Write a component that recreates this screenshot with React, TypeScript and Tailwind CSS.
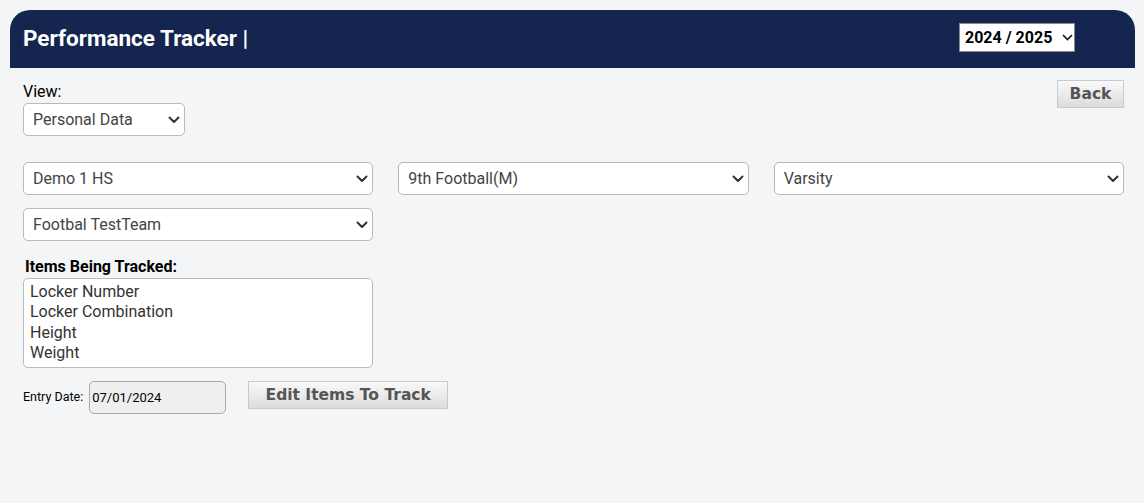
import React from "react";

const Chevron = ({ className = "" }: { className?: string }) => (
  <svg
    width="12"
    height="8"
    viewBox="0 0 12 8"
    className={"pointer-events-none absolute top-1/2 -translate-y-1/2 " + className}
  >
    <path d="M1.5 1.5 L6 6 L10.5 1.5" stroke="#333" strokeWidth="2" fill="none" strokeLinecap="round" strokeLinejoin="round" />
  </svg>
);

const Select = ({ value, className = "" }: { value: string; className?: string }) => (
  <div className={"relative " + className}>
    <select
      defaultValue={value}
      className="h-[33px] w-full appearance-none rounded-[5px] border border-[#b9b9b9] bg-white pl-[9px] pr-6 text-[16px] text-[#444] outline-none"
    >
      <option>{value}</option>
    </select>
    <Chevron className="right-[5px]" />
  </div>
);

const GrayButton = ({ label, className = "" }: { label: string; className?: string }) => (
  <button
    className={
      "h-[28px] border border-[#cacaca] bg-gradient-to-b from-[#f9f9f9] to-[#dcdcdc] pt-[2px] font-['DejaVu_Sans',Verdana,sans-serif] text-[15.5px] font-bold text-[#555] " +
      className
    }
  >
    {label}
  </button>
);

export default function App() {
  return (
    <div className="min-h-screen bg-[#f4f5f7] pt-[10px] font-['Roboto',Arial,sans-serif]">
      <div className="ml-[10px] mr-[9px] flex h-[58px] items-center justify-between rounded-t-[20px] bg-[#14254f] pl-[13px] pr-[60px]">
        <h1 className="text-[22.5px] font-bold text-white">Performance Tracker |</h1>
        <div className="relative -mt-[3px]">
          <select
            defaultValue="2024 / 2025"
            className="h-[29px] w-[116px] appearance-none border border-[#8a8a8a] bg-white pl-[5px] text-[16px] font-bold text-black outline-none"
          >
            <option>2024 / 2025</option>
          </select>
          <svg width="11" height="7" viewBox="0 0 11 7" className="pointer-events-none absolute right-[2px] top-[11px]">
            <path d="M1 1 L5.5 5.5 L10 1" stroke="#111" strokeWidth="1.6" fill="none" />
          </svg>
        </div>
      </div>

      <div className="pl-[23px] pr-[20px]">
        <div className="flex items-start justify-between">
          <div className="mt-[14px]">
            <div className="text-[16px] leading-[20px] text-black">View:</div>
            <Select value="Personal Data" className="mt-[1px] w-[162px]" />
          </div>
          <GrayButton label="Back" className="mt-[12px] w-[67px]" />
        </div>

        <div className="mt-[26px] grid grid-cols-3 gap-x-[25px] gap-y-[13px]">
          <Select value="Demo 1 HS" />
          <Select value="9th Football(M)" />
          <Select value="Varsity" />
          <Select value="Footbal TestTeam" />
        </div>

        <div className="ml-[2px] mt-[16px] text-[16px] font-bold leading-[20px] text-black">Items Being Tracked:</div>
        <div className="mt-[1px] h-[90px] w-[350px] rounded-[5px] border border-[#b9b9b9] bg-white pl-[6px] pt-[3px] text-[16px] leading-[20.3px] text-[#333]">
          <div>Locker Number</div>
          <div>Locker Combination</div>
          <div>Height</div>
          <div>Weight</div>
        </div>

        <div className="mt-[13px] flex items-start">
          <div className="flex items-center">
            <span className="text-[12.5px] text-black">Entry Date:</span>
            <input
              defaultValue="07/01/2024"
              className="ml-[6px] h-[33px] w-[137px] rounded-[5px] border border-[#aaa] bg-[#efefef] pl-[2px] text-[13px] text-black outline-none"
            />
          </div>
          <GrayButton label="Edit Items To Track" className="ml-[22px] h-[27px] w-[200px]" />
        </div>
      </div>
    </div>
  );
}
